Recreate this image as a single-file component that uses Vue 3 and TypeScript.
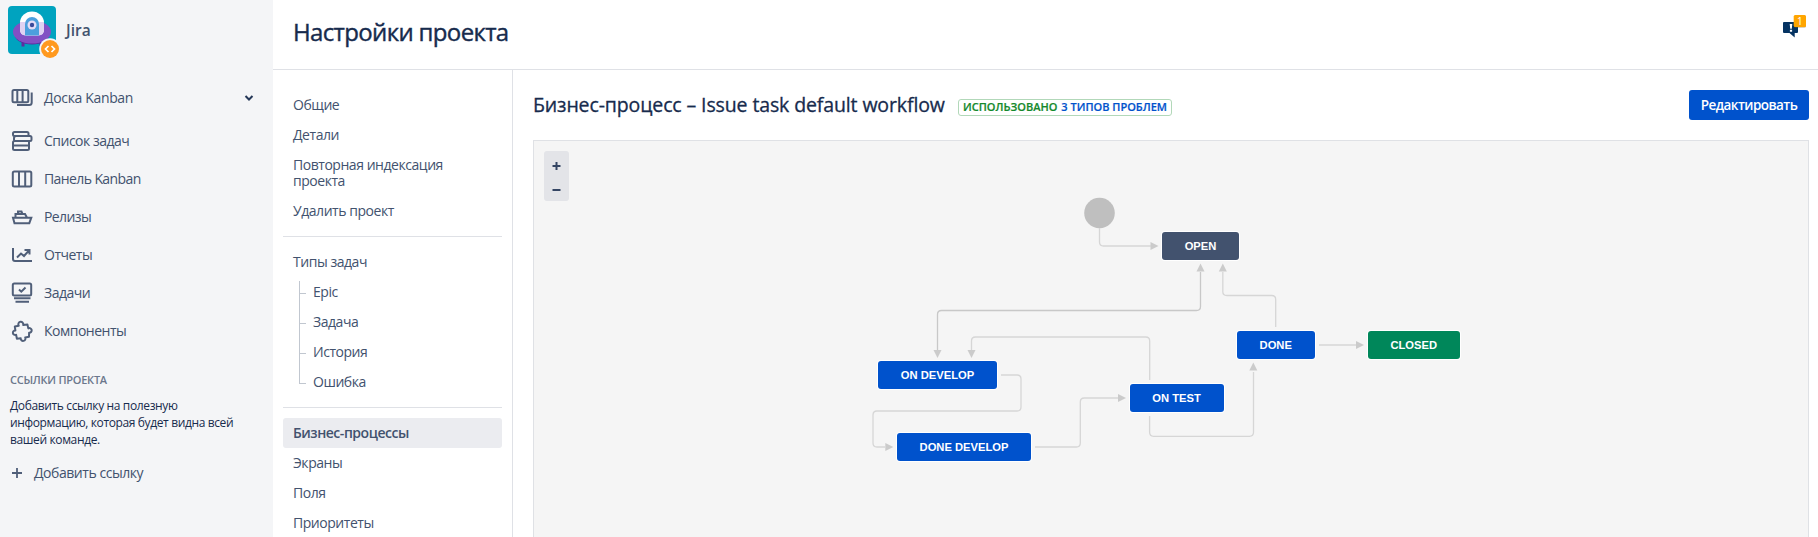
<script setup lang="ts">
interface NavItem { label: string; icon: string; tight?: boolean }
interface WorkflowNode { label: string; x: number; y: number; w: number; tone: string }
interface Edge { d: string; strong?: boolean }

const nav: NavItem[] = [
  { label: 'Список задач', icon: 'backlog' },
  { label: 'Панель Kanban', icon: 'board', tight: true },
  { label: 'Релизы', icon: 'ship', tight: true },
  { label: 'Отчеты', icon: 'reports' },
  { label: 'Задачи', icon: 'issues' },
  { label: 'Компоненты', icon: 'component' },
]
const general: string[] = ['Общие', 'Детали', 'Повторная индексация проекта', 'Удалить проект']
const issueTypes: string[] = ['Epic', 'Задача', 'История', 'Ошибка']
const schemes: string[] = ['Бизнес-процессы', 'Экраны', 'Поля', 'Приоритеты']

// Node coordinates are relative to the canvas' inner origin.
const nodes: WorkflowNode[] = [
  { label: 'OPEN', x: 628, y: 91, w: 77, tone: 'todo' },
  { label: 'ON DEVELOP', x: 344, y: 220, w: 119, tone: 'progress' },
  { label: 'DONE DEVELOP', x: 363, y: 292, w: 134, tone: 'progress' },
  { label: 'ON TEST', x: 595.6, y: 243, w: 94, tone: 'progress' },
  { label: 'DONE', x: 702.5, y: 190, w: 78.5, tone: 'progress' },
  { label: 'CLOSED', x: 833.7, y: 190, w: 92, tone: 'done' },
]
const edges: Edge[] = [
  { d: 'M565.5 87 V101 Q565.5 105 569.5 105 H617' },
  { d: 'M666.5 131 V165.5 Q666.5 169.5 662.5 169.5 H407.5 Q403.5 169.5 403.5 173.5 V209', strong: true },
  { d: 'M615.7 239 V200 Q615.7 196 611.7 196 H441.5 Q437.5 196 437.5 200 V209' },
  { d: 'M467 234 H483 Q487 234 487 238 V266 Q487 270 483 270 H343 Q339 270 339 274 V302 Q339 306 343 306 H351' },
  { d: 'M501 306 H542.3 Q546.3 306 546.3 302 V261 Q546.3 257 550.3 257 H584' },
  { d: 'M615.6 275 V291.3 Q615.6 295.3 619.6 295.3 H715.5 Q719.5 295.3 719.5 291.3 V231' },
  { d: 'M741.7 186 V158.5 Q741.7 154.5 737.7 154.5 H692.8 Q688.8 154.5 688.8 150.5 V131' },
  { d: 'M785 204 H822' },
]
const arrows: string[] = [
  'M624.5 105 l-8 -4 v8z',
  'M666.5 122.6 l-4 8 h8z',
  'M403.5 217 l-4 -8 h8z',
  'M437.5 217 l-4 -8 h8z',
  'M359.3 306 l-8 -4 v8z',
  'M592 257 l-8 -4 v8z',
  'M719.3 221.5 l-4 8 h8z',
  'M688.8 122.6 l-4 8 h8z',
  'M830 204 l-8 -4 v8z',
]
</script>

<template>
  <div class="page">
    <aside class="sidebar">
      <div class="project">
        <div class="avatar">
          <svg width="54" height="54" viewBox="0 0 54 54">
            <rect width="48" height="48" rx="4" fill="#00a3bf" />
            <path d="M13.500 34v6.500h3V36zM31.500 34v6.500h3V34z" fill="#5e2ca0" />
            <ellipse cx="24" cy="29" rx="17" ry="9.500" fill="#5a2a9c" />
            <ellipse cx="24" cy="26" rx="19" ry="11.500" fill="#8250c4" />
            <path d="M12 17a12 11.500 0 0 1 24 0v6q0 6.500-6 6.500H18q-6 0-6-6.500z" fill="#fff" />
            <path d="M12 16h24v7q0 6.500-6 6.500H18q-6 0-6-6.500z" fill="#dfd2f2" />
            <path d="M17 18a7 7 0 0 1 14 0v11.500H17z" fill="#4c9fdd" />
            <circle cx="24" cy="19" r="4.500" fill="#e4dcf6" />
            <circle cx="24" cy="19" r="2.200" fill="#3b4a9a" />
            <circle cx="42" cy="43" r="10.800" fill="#f4f5f7" />
            <circle cx="42" cy="43" r="9" fill="#ff991f" />
            <path d="M40.500 40l-3 3 3 3M43.500 40l3 3-3 3" fill="none" stroke="#fff" stroke-width="1.700" />
          </svg>
        </div>
        <span class="project-name">Jira</span>
      </div>

      <div class="board-switch">
        <svg class="ico" width="24" height="24" viewBox="0 0 24 24">
          <rect x="2.500" y="4" width="15.800" height="12.300" rx="1.500" />
          <path d="M7.300 4v12M12.600 4v12M21.700 6.500V16.500q0 2.500-2.500 2.500H7" />
        </svg>
        <span class="label wide">Доска Kanban</span>
        <svg class="chev" width="10" height="8" viewBox="0 0 10 8"><path d="M1.500 2l3.500 3.500L8.500 2" /></svg>
      </div>

      <nav class="nav">
        <div v-for="n in nav" :key="n.label" class="nav-item">
          <svg class="ico" width="24" height="24" viewBox="0 0 24 24">
            <template v-if="n.icon === 'backlog'">
              <path d="M18.500 7V4.500q0-1.500-1.500-1.500H4.500Q3 3 3 4.500v1Q3 7 4.500 7H20q1.500 0 1.500 1.500v2q0 1.500-1.500 1.500H5M5.500 7.500q-1.500 0-1.500 1.500v1.500q0 1.500 1.500 1.500M4.500 12Q3 12 3 13.500v6Q3 21 4.500 21h13q1.500 0 1.500-1.500V12M3 16.500h16" />
            </template>
            <template v-else-if="n.icon === 'board'">
              <rect x="2.800" y="4.500" width="18.500" height="15" rx="1.500" />
              <path d="M9 4.500v15M15.200 4.500v15" />
            </template>
            <template v-else-if="n.icon === 'ship'">
              <path d="M3 12.700h18.300l-2 5.500H4.500zM5.500 12V9H15l1.800 3.300M8 9V6.500h3.500L12.500 9" />
            </template>
            <template v-else-if="n.icon === 'reports'">
              <path d="M3 5v11q0 2 2 2h17M7 14.500l4-4 3 2.500 5-5.500M14.500 7h5v4.500" />
            </template>
            <template v-else-if="n.icon === 'issues'">
              <rect x="2.800" y="2.500" width="18.400" height="12" rx="1.500" />
              <path d="M9 8.500l2.300 2.200L15.500 6.500M4 17.300h16.500M5.500 20.800h13.500" />
            </template>
            <template v-else>
              <path stroke-linejoin="round" d="M4.800 7.600L8.800 6.800a2.500 2.500 0 1 1 4.400-.8L17.400 5.400l.9 4a2.300 2.300 0 1 1 .8 4.300L19 17.800l-3.800.6a2.400 2.400 0 1 1-4.500.8L6.900 19.700l-.8-3.900a2.300 2.300 0 1 1-.7-4.400z" />
            </template>
          </svg>
          <span class="label" :class="{ tight: n.tight }">{{ n.label }}</span>
        </div>
      </nav>

      <h3 class="links-title">Ссылки проекта</h3>
      <p class="links-text">Добавить ссылку на полезную<br />информацию, которая будет видна всей<br />вашей команде.</p>
      <div class="add-link">
        <svg width="12" height="12" viewBox="0 0 12 12"><path d="M6 1v10M1 6h10" /></svg>
        <span>Добавить ссылку</span>
      </div>
    </aside>

    <main class="main">
      <header class="header">
        <h1>Настройки проекта</h1>
        <svg class="feedback" width="26" height="26" viewBox="0 0 26 26">
          <path d="M3 8h13q1 0 1 1v9q0 1-1 1h-2.300v4.500L8.500 19H3q-1 0-1-1V9q0-1 1-1z" fill="#053362" />
          <path d="M8.700 10h2.600l-.5 4.800H9.200zM8.900 15.800h2.200v2H8.900z" fill="#fff" />
          <rect x="13" y="1.500" width="12" height="12" rx="1.500" fill="#8a6a1c" opacity=".6" />
          <rect x="12.700" y="1" width="12.300" height="12" rx="1.500" fill="#ffa500" />
          <text x="18.900" y="10.600" text-anchor="middle">1</text>
        </svg>
      </header>

      <div class="body">
        <nav class="settings">
          <div v-for="g in general" :key="g" class="s-item">{{ g }}</div>
          <hr />
          <div class="s-item">Типы задач</div>
          <ul class="tree">
            <li v-for="t in issueTypes" :key="t">{{ t }}</li>
          </ul>
          <hr />
          <div v-for="(s, i) in schemes" :key="s" class="s-item" :class="{ selected: i === 0 }">{{ s }}</div>
        </nav>

        <section class="content">
          <div class="title-row">
            <h2>Бизнес-процесс – Issue task default workflow</h2>
            <span class="lozenge"><span>Использовано</span> <a>3 типов проблем</a></span>
            <button class="edit" type="button">Редактировать</button>
          </div>
          <div class="canvas">
            <div class="zoom">
              <svg width="25" height="50" viewBox="0 0 25 50"><path d="M8.500 15h8M12.500 11v8M8.500 39h8" /></svg>
            </div>
            <svg class="edges" width="1274" height="396" viewBox="0 0 1274 396">
              <circle cx="565.500" cy="72" r="15.300" />
              <path v-for="e in edges" :key="e.d" class="edge" :class="{ strong: e.strong }" :d="e.d" />
              <path v-for="a in arrows" :key="a" class="arrow" :d="a" />
            </svg>
            <div
              v-for="n in nodes"
              :key="n.label"
              class="node"
              :class="n.tone"
              :style="{ left: n.x + 'px', top: n.y + 'px', width: n.w + 'px' }"
            >{{ n.label }}</div>
          </div>
        </section>
      </div>
    </main>
  </div>
</template>

<style>
body { margin: 0; overflow: hidden; }
</style>

<style scoped>
.page { display: flex; width: 1818px; height: 537px; overflow: hidden; background: #fff; color: #42526e; font: 14px/20px "Open Sans", "Noto Sans", sans-serif; }
.page * { box-sizing: border-box; }
.sidebar { flex: none; width: 273px; background: #f4f5f7; }
.project { display: flex; height: 76px; padding: 6px 0 0 8px; }
.avatar { width: 58px; }
.avatar svg { display: block; }
.project-name { font-size: 15.500px; font-weight: 600; line-height: 22px; margin-top: 13px; }
.board-switch, .nav-item { display: flex; align-items: center; padding-left: 10px; height: 38px; white-space: nowrap; }
.board-switch { height: 43px; }
.ico { flex: none; margin-right: 10px; fill: none; stroke: #505f79; stroke-width: 2; }
.chev { margin-left: auto; margin-right: 19px; fill: none; stroke: #253858; stroke-width: 2; }
.nav { margin-top: 3px; }
.label { letter-spacing: -.5px; }
.label.wide { letter-spacing: -.35px; }
.label.tight { letter-spacing: -.6px; }
.links-title { margin: 20px 0 0 10px; font-size: 11px; line-height: 20px; font-weight: 600; color: #6b778c; text-transform: uppercase; letter-spacing: -.25px; }
.links-text { margin: 7px 0 0 10px; font-size: 12px; line-height: 17px; color: #172b4d; white-space: nowrap; letter-spacing: -.37px; }
.add-link { display: flex; align-items: center; height: 20px; margin: 15px 0 0 11px; letter-spacing: -.46px; }
.add-link svg { margin-right: 11px; stroke: #505f79; stroke-width: 1.8; }
.main { flex: 1; display: flex; flex-direction: column; min-width: 0; }
.header { display: flex; height: 70px; border-bottom: 1px solid #dfe1e6; padding: 14px 11px 0 20px; justify-content: space-between; }
h1 { margin: 0; font-size: 24px; line-height: 36px; font-weight: 500; color: #172b4d; letter-spacing: -.65px; -webkit-text-stroke: .4px #172b4d; }
.feedback text { fill: #fff; font: 10px "Open Sans", sans-serif; }
.body { flex: 1; display: flex; min-height: 0; }
.settings { flex: none; width: 240px; border-right: 1px solid #dfe1e6; padding: 20px 10px 0; letter-spacing: -.46px; line-height: 16px; }
.s-item { padding: 7px 40px 7px 10px; }
.selected { background: #ebecf0; border-radius: 3px; font-weight: 600; }
hr { height: 1px; margin: 10px 0; border: 0; background: #dfe1e6; }
.tree { list-style: none; margin: 0; padding: 0; }
.tree li { position: relative; height: 30px; padding: 7px 0 7px 30px; }
.tree li::before { content: ""; position: absolute; left: 16px; top: 4px; width: 6px; height: 12px; border-left: 1px solid #c1c7d0; border-bottom: 1px solid #c1c7d0; }
.tree li:not(:first-child)::before { top: -15px; height: 31px; }
.content { flex: 1; display: flex; flex-direction: column; min-width: 0; padding: 20px 9px 0 20px; }
.title-row { display: flex; align-items: center; height: 30px; margin-bottom: 20px; white-space: nowrap; }
h2 { width: 425px; margin: 0; font-size: 19.500px; line-height: 28px; font-weight: 500; color: #172b4d; letter-spacing: -.12px; -webkit-text-stroke: .3px #172b4d; }
.lozenge { display: flex; justify-content: center; gap: 4px; width: 214px; height: 17px; margin-top: 4px; border: 1px solid #b2d8b9; border-radius: 3px; font-size: 11px; font-weight: 600; line-height: 14px; color: #14892c; text-transform: uppercase; -webkit-text-stroke: .2px currentColor; }
.lozenge a { color: #0052cc; }
.edit { width: 120px; height: 30px; margin-left: auto; padding: 0; border: 0; border-radius: 3px; background: #0052cc; color: #fff; font: 600 13.500px/30px "Open Sans", sans-serif; letter-spacing: -.55px; }
.canvas { position: relative; flex: 1; border: 1px solid #dfe1e5; border-bottom: 0; background: #f5f5f5; }
.zoom { position: absolute; left: 10px; top: 10px; width: 25px; height: 50px; border-radius: 3px; background: #e3e4e8; }
.zoom path { stroke: #344563; stroke-width: 2; }
.edges { position: absolute; left: 0; top: 0; }
.edges circle { fill: #bfbfbf; }
.edge { fill: none; stroke: #d6d6d6; stroke-width: 1.3; }
.edge.strong { stroke: #c8c8c8; }
.arrow { fill: #cbcbcb; }
.node { position: absolute; height: 28px; border-radius: 3px; color: #fff; font: bold 11.200px/28px "Liberation Sans", Arial, sans-serif; text-align: center; white-space: nowrap; box-shadow: 0 0 0 1px #fff; }
.todo { background: #42526e; }
.progress { background: #0052cc; }
.done { background: #00875a; }
</style>
